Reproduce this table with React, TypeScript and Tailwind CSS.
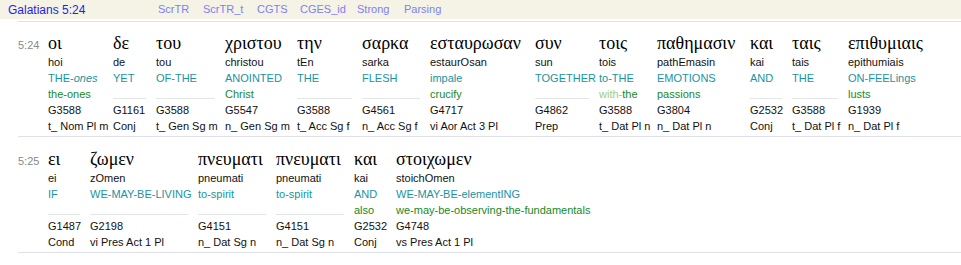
import React from "react";

type Word = {
  gk: string;
  tr: string;
  g1: React.ReactNode;
  g2?: React.ReactNode;
  st: string;
  ps: string;
  w?: number;
};

const sans = { fontFamily: '"Liberation Sans", Arial, sans-serif' };
const serif = { fontFamily: '"Liberation Serif", "DejaVu Serif", serif' };

const verses: { ref: string; words: Word[] }[] = [
  {
    ref: "5:24",
    words: [
      { gk: "οι", tr: "hoi", g1: <>THE-<i>ones</i></>, g2: "the-ones", st: "G3588", ps: "t_ Nom Pl m", w: 65 },
      { gk: "δε", tr: "de", g1: "YET", st: "G1161", ps: "Conj", w: 43 },
      { gk: "του", tr: "tou", g1: "OF-THE", st: "G3588", ps: "t_ Gen Sg m", w: 69 },
      { gk: "χριστου", tr: "christou", g1: "ANOINTED", g2: "Christ", st: "G5547", ps: "n_ Gen Sg m", w: 72 },
      { gk: "την", tr: "tEn", g1: "THE", st: "G3588", ps: "t_ Acc Sg f", w: 65 },
      { gk: "σαρκα", tr: "sarka", g1: "FLESH", st: "G4561", ps: "n_ Acc Sg f", w: 68 },
      { gk: "εσταυρωσαν", tr: "estaurOsan", g1: "impale", g2: "crucify", st: "G4717", ps: "vi Aor Act 3 Pl", w: 105 },
      { gk: "συν", tr: "sun", g1: "TOGETHER", st: "G4862", ps: "Prep", w: 64 },
      {
        gk: "τοις",
        tr: "tois",
        g1: "to-THE",
        g2: <><span className="text-[#a3cc7a]">with-</span>the</>,
        st: "G3588",
        ps: "t_ Dat Pl n",
        w: 58,
      },
      { gk: "παθημασιν", tr: "pathEmasin", g1: "EMOTIONS", g2: "passions", st: "G3804", ps: "n_ Dat Pl n", w: 93 },
      { gk: "και", tr: "kai", g1: "AND", st: "G2532", ps: "Conj", w: 42 },
      { gk: "ταις", tr: "tais", g1: "THE", st: "G3588", ps: "t_ Dat Pl f", w: 56 },
      { gk: "επιθυμιαις", tr: "epithumiais", g1: "ON-FEELings", g2: "lusts", st: "G1939", ps: "n_ Dat Pl f" },
    ],
  },
  {
    ref: "5:25",
    words: [
      { gk: "ει", tr: "ei", g1: "IF", st: "G1487", ps: "Cond", w: 42 },
      { gk: "ζωμεν", tr: "zOmen", g1: "WE-MAY-BE-LIVING", st: "G2198", ps: "vi Pres Act 1 Pl", w: 108 },
      { gk: "πνευματι", tr: "pneumati", g1: "to-spirit", st: "G4151", ps: "n_ Dat Sg n", w: 78 },
      { gk: "πνευματι", tr: "pneumati", g1: "to-spirit", st: "G4151", ps: "n_ Dat Sg n", w: 78 },
      { gk: "και", tr: "kai", g1: "AND", g2: "also", st: "G2532", ps: "Conj", w: 42 },
      {
        gk: "στοιχωμεν",
        tr: "stoichOmen",
        g1: "WE-MAY-BE-elementING",
        g2: "we-may-be-observing-the-fundamentals",
        st: "G4748",
        ps: "vs Pres Act 1 Pl",
      },
    ],
  },
];

const links = [
  { t: "ScrTR", w: 45 },
  { t: "ScrTR_t", w: 54 },
  { t: "CGTS", w: 43 },
  { t: "CGES_id", w: 57 },
  { t: "Strong", w: 47 },
  { t: "Parsing" },
];

function WordCol({ word }: { word: Word }) {
  return (
    <div
      className="flex shrink-0 flex-col whitespace-nowrap"
      style={word.w ? { width: word.w } : undefined}
    >
      <div className="text-[18px] leading-[21px] text-black" style={serif}>
        {word.gk}
      </div>
      <div className="pr-[10px] text-[11px] leading-[16px]">
        <div className="text-[#111]">{word.tr}</div>
        <div className="text-[#1a93a3]">{word.g1}</div>
        {word.g2 ? (
          <div className="text-[#178a1f]">{word.g2}</div>
        ) : (
          <div className="h-[16px]">
            <div className="h-[13px] border-b border-[#e1e8e4]" />
          </div>
        )}
        <div className="text-[#111]">{word.st}</div>
        <div className="text-[#111]">{word.ps}</div>
      </div>
    </div>
  );
}

export default function App() {
  return (
    <div className="w-[961px] bg-white" style={sans}>
      <div className="flex h-[19px] items-center bg-[#f5f2e6] pl-[8px]">
        <div className="w-[150px] text-[12px] text-[#1f1fe6]">Galatians 5:24</div>
        {links.map((l) => (
          <span
            key={l.t}
            className="text-[11px] text-[#7f80f2]"
            style={l.w ? { width: l.w } : undefined}
          >
            {l.t}
          </span>
        ))}
      </div>
      <div className="mt-[2px] pl-[18px]">
        {verses.map((v, i) => (
          <div
            key={v.ref}
            className={
              i === 0
                ? "flex items-baseline border-t border-[#e0e0ea] pt-[11px] pb-[2px]"
                : "flex items-baseline border-t border-[#e0e0ea] pt-[12px] pb-[2px]"
            }
          >
            <div className="w-[30px] shrink-0 text-[11px] text-[#8a8a8a]">{v.ref}</div>
            {v.words.map((w, j) => (
              <WordCol key={j} word={w} />
            ))}
          </div>
        ))}
        <div className="border-t border-[#e0e0ea]" />
      </div>
    </div>
  );
}
